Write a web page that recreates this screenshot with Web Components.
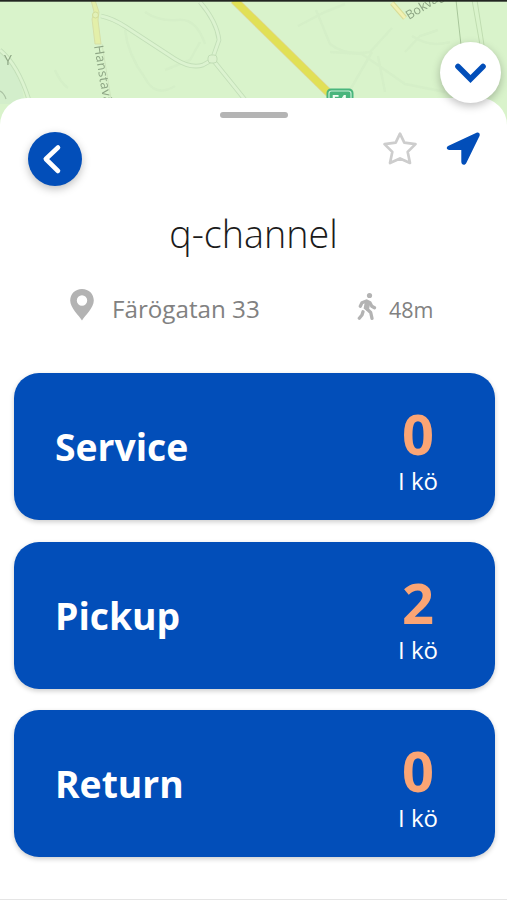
<!DOCTYPE html>
<html lang="sv">
<head>
<meta charset="utf-8">
<title>q-channel</title>
<style>
html,body{margin:0;padding:0;background:#fff}
body{width:507px;height:900px;overflow:hidden;font-family:"Open Sans","Noto Sans",sans-serif}
</style>
</head>
<body>
<queue-app></queue-app>
<script>
function define(name, html){
  const t=document.createElement('template');
  t.innerHTML=html;
  customElements.define(name,class extends HTMLElement{
    constructor(){super();this.attachShadow({mode:'open'}).appendChild(t.content.cloneNode(true));}
  });
}

define('map-view',`<style>
:host{display:block;height:130px;overflow:hidden;background:#d9f3cb}
svg{display:block}
text{font-family:"Open Sans",sans-serif;fill:#8da584}
</style>
<svg width="507" height="130" viewBox="0 0 507 130">
  <defs><filter id="soft" x="-5%" y="-5%" width="110%" height="110%"><feGaussianBlur stdDeviation=".6"/></filter></defs>
  <g filter="url(#soft)" fill="none">
    <path d="M0 52Q15 60 20 78L25 104H0Z" fill="#d3eecb"/>
    <g stroke="#cfe9c2" stroke-width="2.500" opacity=".4">
      <path d="M125 30Q128 55 145 78Q155 98 175 86M145 12Q160 22 178 20T205 44M55 70Q60 82 68 88M165 70L190 60L200 42"/>
      <path d="M298 26L325 12L345 4M316 10L330 44Q345 56 370 52L392 28M330 52L362 54L405 84L445 92M372 52L350 90M378 56L385 92M405 52L420 36L438 30M412 36Q430 48 450 42"/>
    </g>
    <path d="M0 50Q18 65 29 100M101 16Q112 18 126 27L175 59Q191 69 203 65L212 60L219 40Q217 22 200 2M213 60L246 101" stroke="#c3dfb8" stroke-width="4.600"/>
    <path d="M0 50Q18 65 29 100M101 16Q112 18 126 27L175 59Q191 69 203 65L212 60L219 40Q217 22 200 2M213 60L246 101" stroke="#dcf3d0" stroke-width="2.800"/>
    <rect x="208" y="55" width="9" height="8" rx="3" fill="#dcf2cf" stroke="#c1ddb5"/>
    <path d="M0 91Q4 93 6 99" stroke="#a9c1a2" stroke-width="1.200"/>
    <path d="M91 0L94 12L92 19L95 44H101L98 20L99 12L95 0Z" fill="#e3efa9" stroke="#d6dfa6"/>
    <circle cx="95.500" cy="15" r="3" fill="#e2f1b8" stroke="#d1dd9a"/>
    <path d="M102 44L111 99" stroke="#cee5bd"/>
    <path d="M234 0L334 98" stroke="#dfd596" stroke-width="8.600"/>
    <path d="M234 0L334 98" stroke="#e1e057" stroke-width="7.200"/>
    <path d="M392 3L405 18" stroke="#d9dd98" stroke-width="5"/>
    <path d="M392 3L405 18" stroke="#f1f1b3" stroke-width="2.800"/>
    <path d="M456 0L461 45" stroke="#a8c69b"/>
    <path d="M472 0L480 45M477 0L484 45" stroke="#c0ddb1"/>
    <text x="4" y="65" font-size="14">Y</text>
    <text font-size="13" transform="translate(94 46) rotate(80.500)" letter-spacing=".35">Hanstavägen</text>
    <text font-size="12.500" transform="translate(409 20) rotate(-32)">Bokvägen</text>
    <rect x="326.500" y="88.500" width="27" height="22" rx="4.500" fill="#48b57c"/>
    <rect x="329" y="91" width="22" height="20" rx="2.500" stroke="#c9efd5" stroke-width="1.200"/>
    <text x="331.500" y="104.500" font-size="14" font-weight="700" style="fill:#eefcf0">E4</text>
  </g>
  <rect width="507" height="1.700" fill="#222521"/>
</svg>`);

define('round-button',`<style>
:host{display:flex;align-items:center;justify-content:center;box-sizing:border-box;border-radius:50%;box-shadow:0 3px 8px rgba(0,0,0,.25);flex:none}
</style><slot></slot>`);

define('sheet-toolbar',`<style>
:host{display:flex;align-items:flex-start;height:68px;padding:0 26px 0 28px}
round-button{width:54px;height:54px;background:#024eb9;margin-top:3px}
svg{display:block}
.actions{display:flex;margin-left:auto;gap:28px;padding-top:1px}
</style>
<round-button><svg width="54" height="54" viewBox="0 0 54 54"><path d="M30 15.500L17.800 27L30 39" fill="none" stroke="#fff" stroke-width="4.600" stroke-linecap="round" stroke-linejoin="round"/></svg></round-button>
<div class="actions">
<svg width="36" height="36" viewBox="0 0 36 36"><path d="M18 3.700L22.300 12.600L33.500 14.100L25.700 21.900L28 33L18 28.400L8 33L10.300 21.900L2.500 14.100L13.700 12.600Z" fill="none" stroke="#cdcdcd" stroke-width="2.700" stroke-linejoin="round"/></svg>
<svg width="35" height="36" viewBox="0 0 35 36"><path d="M30.500 2.800L2.600 15.800C-.2 17.200 .4 20 3.400 20H15.300V31.500C15.300 35.200 19 35.800 20.300 33L33.500 6C34.400 3.600 32.600 1.900 30.500 2.800Z" fill="#024eb9"/></svg>
</div>`);

define('place-info',`<style>
:host{display:flex;align-items:flex-start;height:85px;padding-left:69px;color:#818181;font-size:24.200px;line-height:36px}
svg{display:block;flex:none}
.address{margin-left:17px;width:245px;padding-top:3px;white-space:nowrap}
.distance{margin-left:12px;font-size:21.500px;padding-top:4px}
.walk{margin-top:4px}
</style>
<svg width="26" height="36" viewBox="0 0 26 36"><path fill="#b3b3b3" fill-rule="evenodd" d="M13 1C6 1 1.200 6 1.200 12.500C1.200 20 10 27.500 13 32.500C16 27.500 24.800 20 24.800 12.500C24.800 6 20 1 13 1ZM13 7.300A5.200 5.200 0 1 1 13 17.700A5.200 5.200 0 1 1 13 7.300Z"/></svg>
<span class="address"><slot name="address"></slot></span>
<svg class="walk" width="20" height="30" viewBox="0 0 20 30"><circle cx="12.500" cy="3.500" r="2.600" fill="#b3b3b3"/><path d="M3.300 14.200L5 10.800L9.500 9L13 10.800L14.800 14.300L17.500 15.700M6 19.800L5 23L2.300 26.200M10 17L13.700 20.500L15 26.300" fill="none" stroke="#b3b3b3" stroke-width="3.300" stroke-linecap="round" stroke-linejoin="round"/><path d="M8 9L13.500 10L12 17.500L10 19L6.600 16.500Z" fill="#b3b3b3"/></svg>
<span class="distance"><slot name="distance"></slot></span>`);

define('queue-card',`<style>
:host{display:flex;align-items:center;justify-content:space-between;box-sizing:border-box;height:147px;padding:0 56px 0 41px;border-radius:25px;background:#024eb9;color:#fff;box-shadow:0 2px 5px rgba(0,0,0,.2)}
.name{font-size:37.300px;font-weight:700;line-height:50px;padding-top:1px}
.status{display:flex;flex-direction:column;align-items:center;width:42px;white-space:nowrap;padding-top:5px}
.count{font-size:56px;font-weight:700;line-height:64px;color:#fba574}
.caption{font-size:24px;line-height:32px}
</style>
<span class="name"><slot></slot></span>
<div class="status"><span class="count"><slot name="count"></slot></span><span class="caption"><slot name="caption"></slot></span></div>`);

define('bottom-sheet',`<style>
:host{display:block;position:relative;box-sizing:border-box;height:802px;margin-top:-32px;padding-top:14px;background:#fff;border-radius:27px 27px 0 0;border-bottom:1px solid #e5e5e5}
.handle{width:68px;height:6px;border-radius:3px;background:#b4b4b4;margin:0 auto 11px}
h1{margin:0;height:91px;font-size:37.700px;line-height:73px;font-weight:300;color:#1b1b1b;text-align:center}
.list{display:grid;row-gap:21.500px;padding:0 12px 0 14px}
</style>
<div class="handle"></div>
<sheet-toolbar></sheet-toolbar>
<h1><slot name="title"></slot></h1>
<slot name="info"></slot>
<div class="list"><slot></slot></div>`);

define('queue-app',`<style>
:host{display:block;position:relative;width:507px;height:900px;overflow:hidden}
.collapse{position:absolute;left:440px;top:42px;width:61px;height:61px;background:#fff}
</style>
<map-view></map-view>
<bottom-sheet>
  <span slot="title">q-channel</span>
  <place-info slot="info"><span slot="address">Färögatan 33</span><span slot="distance">48m</span></place-info>
  <queue-card>Service<span slot="count">0</span><span slot="caption">I kö</span></queue-card>
  <queue-card>Pickup<span slot="count">2</span><span slot="caption">I kö</span></queue-card>
  <queue-card>Return<span slot="count">0</span><span slot="caption">I kö</span></queue-card>
</bottom-sheet>
<round-button class="collapse"><svg width="61" height="61" viewBox="0 0 61 61"><path d="M18 24.500L30.500 37L43 24.500" fill="none" stroke="#024eb9" stroke-width="5.600" stroke-linecap="round" stroke-linejoin="miter"/></svg></round-button>`);
</script>
</body>
</html>
